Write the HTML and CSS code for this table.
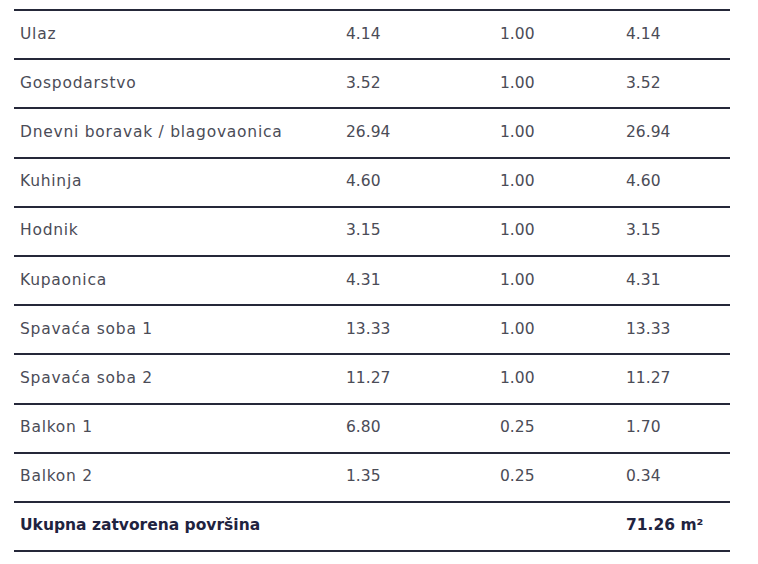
FILE: index.html
```html
<!DOCTYPE html>
<html>
<head>
<meta charset="utf-8">
<link rel="stylesheet" href="styles.css">
</head>
<body>
<div class="sheet">
  <div class="row"><span class="name">Ulaz</span><span>4.14</span><span>1.00</span><span>4.14</span></div>
  <div class="row"><span class="name">Gospodarstvo</span><span>3.52</span><span>1.00</span><span>3.52</span></div>
  <div class="row"><span class="name">Dnevni boravak / blagovaonica</span><span>26.94</span><span>1.00</span><span>26.94</span></div>
  <div class="row"><span class="name">Kuhinja</span><span>4.60</span><span>1.00</span><span>4.60</span></div>
  <div class="row"><span class="name">Hodnik</span><span>3.15</span><span>1.00</span><span>3.15</span></div>
  <div class="row"><span class="name">Kupaonica</span><span>4.31</span><span>1.00</span><span>4.31</span></div>
  <div class="row"><span class="name">Spavaća soba 1</span><span>13.33</span><span>1.00</span><span>13.33</span></div>
  <div class="row"><span class="name">Spavaća soba 2</span><span>11.27</span><span>1.00</span><span>11.27</span></div>
  <div class="row"><span class="name">Balkon 1</span><span>6.80</span><span>0.25</span><span>1.70</span></div>
  <div class="row"><span class="name">Balkon 2</span><span>1.35</span><span>0.25</span><span>0.34</span></div>
  <div class="row total"><span>Ukupna zatvorena površina</span><span></span><span></span><span>71.26 m²</span></div>
  <div class="row end"></div>
</div>
</body>
</html>
```
FILE: styles.css
```css
html, body {
  margin: 0;
  padding: 0;
  background: #ffffff;
}
.sheet {
  padding: 9px 0 0 14px;
  width: 716px;
  font-family: "DejaVu Sans", "Liberation Sans", sans-serif;
  font-size: 15.5px;
  color: #4b4c57;
}
.row {
  display: grid;
  grid-template-columns: 326px 154px 126px 110px;
  height: 47.2px;
  align-items: center;
  border-top: 2px solid #252839;
}
.row span {
  padding: 0 0 2px 6px;
  white-space: nowrap;
}
.row .name {
  letter-spacing: 0.75px;
}
.row.total {
  font-weight: 700;
  color: #1f2340;
}
.row.end {
  height: 20px;
  align-items: start;
}
```
